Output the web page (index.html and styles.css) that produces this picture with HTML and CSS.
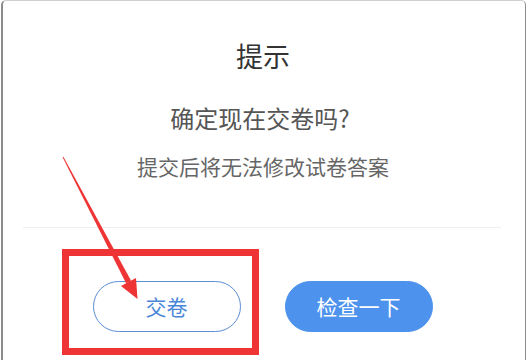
FILE: index.html
```html
<!DOCTYPE html>
<html lang="zh-CN">
<head>
<meta charset="utf-8">
<title>提示</title>
<link rel="stylesheet" href="styles.css">
</head>
<body>
<div class="dialog">
  <h1 class="title">提示</h1>
  <p class="question">确定现在交卷吗?</p>
  <p class="note">提交后将无法修改试卷答案</p>
  <div class="divider"></div>
  <div class="actions">
    <button class="btn btn-outline">交卷</button>
    <button class="btn btn-primary">检查一下</button>
  </div>
</div>
<svg class="annotation" width="527" height="360" viewBox="0 0 527 360" xmlns="http://www.w3.org/2000/svg">
  <rect x="65.5" y="252.5" width="190" height="99" fill="none" stroke="#ee3434" stroke-width="7"/>
  <polygon points="62.6,157.2 63.4,156.8 131,280.6 126.2,283.4" fill="#ee3434"/>
  <polygon points="137.5,299 136,278 121,286" fill="#ee3434"/>
</svg>
</body>
</html>
```
FILE: styles.css
```css
html, body {
  margin: 0;
  padding: 0;
  background: #ffffff;
}
body {
  width: 527px;
  height: 360px;
  overflow: hidden;
  position: relative;
  font-family: "Noto Sans CJK SC", "Noto Sans", sans-serif;
}
.dialog {
  box-sizing: border-box;
  margin-left: 1px;
  width: 525px;
  height: 372px;
  border-left: 2px solid #8c8c8c;
  border-right: 1px solid #8c8c8c;
  border-top: 1px solid #d0d0d0;
  border-radius: 5px 5px 0 0;
  background: #ffffff;
  padding-top: 35px;
  text-align: center;
}
.title {
  margin: 0 0 0 -2px;
  font-size: 27px;
  line-height: 40px;
  font-weight: normal;
  color: #333333;
}
.question {
  margin: 22px 0 0 -8px;
  font-size: 24px;
  line-height: 40px;
  color: #555555;
}
.note {
  margin: 13px 0 0 -2px;
  font-size: 21px;
  line-height: 30px;
  color: #666666;
}
.divider {
  margin: 46px 24px 0 20px;
  height: 1px;
  background: #eeeeee;
}
.actions {
  display: flex;
  justify-content: center;
  gap: 44px;
  margin: 53px 0 0 -3px;
}
.btn {
  box-sizing: border-box;
  width: 148px;
  height: 51px;
  border-radius: 26px;
  font-family: "Noto Sans CJK SC", "Noto Sans", sans-serif;
  font-size: 21px;
  line-height: 1;
  padding: 0;
  cursor: pointer;
}
.btn-outline {
  background: #ffffff;
  border: 1px solid #5b8ed4;
  color: #4a86d8;
}
.btn-primary {
  background: #4d92ec;
  border: 1px solid #4d92ec;
  color: #ffffff;
}
.annotation {
  position: absolute;
  left: 0;
  top: 0;
  pointer-events: none;
}
```
